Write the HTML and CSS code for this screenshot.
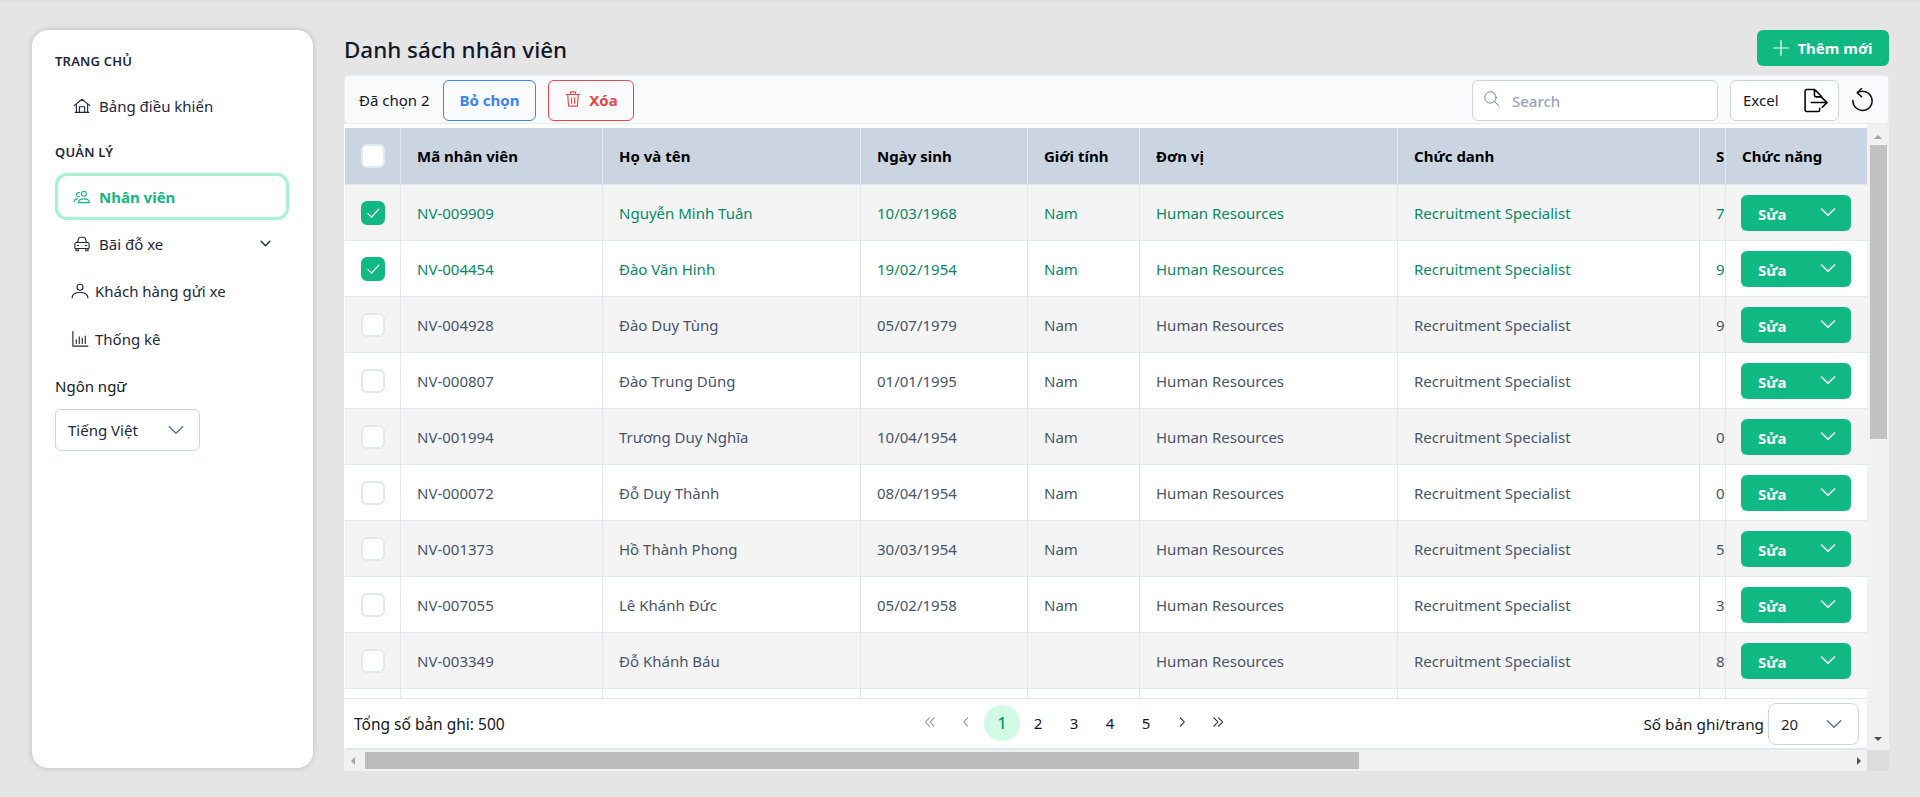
FILE: index.html
```html
<!DOCTYPE html>
<html lang="vi">
<head>
<meta charset="utf-8">
<title>Danh sách nhân viên</title>
<link rel="stylesheet" href="styles.css">
</head>
<body>
<aside class="sidebar">
  <div class="nav-label">TRANG CHỦ</div>
  <a class="nav-item"><svg class="nav-icon" viewBox="0 0 24 24"><path d="M1.500 11.500 12 3l10.500 8.500M4.500 9.500V20.500h15V9.500M3 20.500h18M8.500 20.500V13h7v7.500"/></svg><span>Bảng điều khiển</span></a>
  <div class="nav-label second">QUẢN LÝ</div>
  <a class="nav-item active"><svg class="nav-icon" viewBox="0 0 24 24"><circle cx="14.500" cy="7.500" r="3.200"/><path d="M7 19.500c.5-3.500 3.500-5 7.500-5s7 1.500 7.500 5zM8.500 11.500a2.800 2.800 0 1 1 .5-5M1.500 18c.5-2.500 2.500-3.500 4.500-3.500"/></svg><span>Nhân viên</span></a>
  <a class="nav-item"><svg class="nav-icon" viewBox="0 0 24 24"><path d="M6 10 7.500 4.500C7.800 3.500 8.500 3 9.500 3h5c1 0 1.700.5 2 1.500L18 10M4.500 10h15c1 0 2 1 2 2v5c0 .6-.4 1-1 1h-17c-.6 0-1-.4-1-1v-5c0-1 1-2 2-2zM4 18v3h3v-3M17 18v3h3v-3M5.500 14h2M16.500 14h2"/></svg><span>Bãi đỗ xe</span><svg class="nav-chevron" viewBox="0 0 24 24"><path d="m5 8.500 7 7 7-7"/></svg></a>
  <a class="nav-item tight"><svg class="nav-icon" viewBox="0 0 24 24"><circle cx="12" cy="7" r="4"/><path d="M1.500 21c0-4.500 4-7 10.500-7s10.500 2.500 10.500 7"/></svg><span>Khách hàng gửi xe</span></a>
  <a class="nav-item tight"><svg class="nav-icon" viewBox="0 0 24 24"><path d="M2.500 2v19.500h20M7 18v-5M11 18V9M15 18v-7M19 18V8"/></svg><span>Thống kê</span></a>
  <div class="lang-label">Ngôn ngữ</div>
  <div class="select lang"><span>Tiếng Việt</span><svg class="select-chevron" viewBox="0 0 24 24"><path d="m4 8 8 8 8-8"/></svg></div>
</aside>

<main class="main">
  <header class="topbar">
    <h1>Danh sách nhân viên</h1>
    <button class="btn-add"><svg viewBox="0 0 24 24"><path d="M12 1v22M1 12h22"/></svg><span>Thêm mới</span></button>
  </header>

  <div class="toolbar">
    <span class="selected-count">Đã chọn 2</span>
    <button class="btn-outline blue">Bỏ chọn</button>
    <button class="btn-outline red"><svg viewBox="0 0 24 24"><path d="M3 6h18M8.500 6V3.500c0-.5.5-1 1-1h5c.5 0 1 .5 1 1V6M5 6l1 14.500c0 .6.5 1 1 1h10c.5 0 1-.4 1-1L19 6M10 10.500v7M14 10.500v7"/></svg><span>Xóa</span></button>
    <div class="spacer"></div>
    <div class="search"><svg viewBox="0 0 24 24"><circle cx="10.500" cy="10.500" r="8"/><path d="m16.500 16.500 6 6"/></svg><span>Search</span></div>
    <button class="btn-excel"><span>Excel</span><svg viewBox="0 0 24 24"><path d="M16 19.500V21c0 .8-.7 1.500-1.500 1.500h-11C2.700 22.500 2 21.800 2 21V3c0-.8.7-1.500 1.500-1.500H10c.8 0 1.500.3 2 .8l5.200 5.200c.5.5.8 1 .8 1.800M11 1.500V7c0 .8.700 1.500 1.500 1.500H18M8 14h15M18.500 9.500 23 14l-4.500 4.500"/></svg></button>
    <button class="btn-refresh"><svg viewBox="0 0 24 24"><path d="M6.500 4.500A10 10 0 1 1 2 12.500M11 0 6.500 4.500 11 8.500"/></svg></button>
  </div>

  <section class="panel">
    <div class="panel-body">
      <div class="table-clip">
        <table class="grid">
          <colgroup>
            <col class="c-check"><col class="c-code"><col class="c-name"><col class="c-dob"><col class="c-sex"><col class="c-unit"><col class="c-title"><col class="c-s"><col class="c-act">
          </colgroup>
          <thead>
            <tr><th class="cell-check"><i class="check"></i></th><th>Mã nhân viên</th><th>Họ và tên</th><th>Ngày sinh</th><th>Giới tính</th><th>Đơn vị</th><th>Chức danh</th><th class="cell-s"><div>S</div></th><th class="cell-act">Chức năng</th></tr>
          </thead>
          <tbody>
            <tr class="picked"><td class="cell-check"><i class="check on"><svg viewBox="0 0 24 24"><path d="m5 12.500 5 5L19.500 7"/></svg></i></td><td>NV-009909</td><td>Nguyễn Minh Tuân</td><td>10/03/1968</td><td>Nam</td><td>Human Resources</td><td>Recruitment Specialist</td><td class="cell-s"><div>7</div></td><td class="cell-act"><div class="split"><b>Sửa</b><span class="split-arrow"><svg viewBox="0 0 24 24"><path d="m4 8 8 8 8-8"/></svg></span></div></td></tr>
            <tr class="picked"><td class="cell-check"><i class="check on"><svg viewBox="0 0 24 24"><path d="m5 12.500 5 5L19.500 7"/></svg></i></td><td>NV-004454</td><td>Đào Văn Hinh</td><td>19/02/1954</td><td>Nam</td><td>Human Resources</td><td>Recruitment Specialist</td><td class="cell-s"><div>9</div></td><td class="cell-act"><div class="split"><b>Sửa</b><span class="split-arrow"><svg viewBox="0 0 24 24"><path d="m4 8 8 8 8-8"/></svg></span></div></td></tr>
            <tr><td class="cell-check"><i class="check"></i></td><td>NV-004928</td><td>Đào Duy Tùng</td><td>05/07/1979</td><td>Nam</td><td>Human Resources</td><td>Recruitment Specialist</td><td class="cell-s"><div>9</div></td><td class="cell-act"><div class="split"><b>Sửa</b><span class="split-arrow"><svg viewBox="0 0 24 24"><path d="m4 8 8 8 8-8"/></svg></span></div></td></tr>
            <tr><td class="cell-check"><i class="check"></i></td><td>NV-000807</td><td>Đào Trung Dũng</td><td>01/01/1995</td><td>Nam</td><td>Human Resources</td><td>Recruitment Specialist</td><td class="cell-s"><div></div></td><td class="cell-act"><div class="split"><b>Sửa</b><span class="split-arrow"><svg viewBox="0 0 24 24"><path d="m4 8 8 8 8-8"/></svg></span></div></td></tr>
            <tr><td class="cell-check"><i class="check"></i></td><td>NV-001994</td><td>Trương Duy Nghĩa</td><td>10/04/1954</td><td>Nam</td><td>Human Resources</td><td>Recruitment Specialist</td><td class="cell-s"><div>0</div></td><td class="cell-act"><div class="split"><b>Sửa</b><span class="split-arrow"><svg viewBox="0 0 24 24"><path d="m4 8 8 8 8-8"/></svg></span></div></td></tr>
            <tr><td class="cell-check"><i class="check"></i></td><td>NV-000072</td><td>Đỗ Duy Thành</td><td>08/04/1954</td><td>Nam</td><td>Human Resources</td><td>Recruitment Specialist</td><td class="cell-s"><div>0</div></td><td class="cell-act"><div class="split"><b>Sửa</b><span class="split-arrow"><svg viewBox="0 0 24 24"><path d="m4 8 8 8 8-8"/></svg></span></div></td></tr>
            <tr><td class="cell-check"><i class="check"></i></td><td>NV-001373</td><td>Hồ Thành Phong</td><td>30/03/1954</td><td>Nam</td><td>Human Resources</td><td>Recruitment Specialist</td><td class="cell-s"><div>5</div></td><td class="cell-act"><div class="split"><b>Sửa</b><span class="split-arrow"><svg viewBox="0 0 24 24"><path d="m4 8 8 8 8-8"/></svg></span></div></td></tr>
            <tr><td class="cell-check"><i class="check"></i></td><td>NV-007055</td><td>Lê Khánh Đức</td><td>05/02/1958</td><td>Nam</td><td>Human Resources</td><td>Recruitment Specialist</td><td class="cell-s"><div>3</div></td><td class="cell-act"><div class="split"><b>Sửa</b><span class="split-arrow"><svg viewBox="0 0 24 24"><path d="m4 8 8 8 8-8"/></svg></span></div></td></tr>
            <tr><td class="cell-check"><i class="check"></i></td><td>NV-003349</td><td>Đỗ Khánh Báu</td><td></td><td></td><td>Human Resources</td><td>Recruitment Specialist</td><td class="cell-s"><div>8</div></td><td class="cell-act"><div class="split"><b>Sửa</b><span class="split-arrow"><svg viewBox="0 0 24 24"><path d="m4 8 8 8 8-8"/></svg></span></div></td></tr>
            <tr><td class="cell-check"></td><td></td><td></td><td></td><td></td><td></td><td></td><td class="cell-s"></td><td class="cell-act"></td></tr>
          </tbody>
        </table>
      </div>
      <footer class="pager">
        <span class="total">Tổng số bản ghi: 500</span>
        <nav class="pages">
          <a class="pg muted"><svg viewBox="0 0 24 24"><path d="M11 5 4 12l7 7M19 5l-7 7 7 7"/></svg></a>
          <a class="pg muted"><svg viewBox="0 0 24 24"><path d="m15 5-7 7 7 7"/></svg></a>
          <a class="pg current">1</a><a class="pg">2</a><a class="pg">3</a><a class="pg">4</a><a class="pg">5</a>
          <a class="pg"><svg viewBox="0 0 24 24"><path d="m9 5 7 7-7 7"/></svg></a>
          <a class="pg"><svg viewBox="0 0 24 24"><path d="m5 5 7 7-7 7M13 5l7 7-7 7"/></svg></a>
        </nav>
        <span class="per-page">Số bản ghi/trang</span>
        <div class="select size"><span>20</span><svg class="select-chevron" viewBox="0 0 24 24"><path d="m4 8 8 8 8-8"/></svg></div>
      </footer>
    </div>
    <div class="vbar"><i class="tri up"></i><i class="vthumb"></i><i class="vspace"></i><i class="tri down"></i></div>
    <div class="hbar"><i class="tri left"></i><i class="hthumb"></i><i class="hspace"></i><i class="tri right"></i></div>
    <div class="corner"></div>
  </section>
</main>
</body>
</html>
```

FILE: styles.css
```css
* { box-sizing: border-box; }
html, body { margin: 0; height: 100%; }
body {
  display: flex;
  gap: 31px;
  height: 797px;
  overflow: hidden;
  padding: 30px 31px 26px 32px;
  background: #e5e5e5;
  box-shadow: inset 0 2px 2px -1px #d8d8d8;
  font-family: "Noto Sans", sans-serif;
  font-size: 15px;
  color: #111827;
}
svg { fill: none; stroke: currentColor; stroke-width: 1.5; stroke-linecap: round; stroke-linejoin: round; display: block; }
i { display: block; }

/* sidebar */
.sidebar {
  width: 281px;
  flex: none;
  height: 738px;
  background: #fff;
  border-radius: 16px;
  box-shadow: 0 0 6px rgba(0, 0, 0, .18);
  padding: 20px 24px 20px 23px;
}
.nav-label { font-size: 13px; font-weight: 600; line-height: 22px; color: #1e293b; letter-spacing: .2px; }
.nav-label.second { margin-top: 12px; }
.nav-item { display: flex; align-items: center; height: 47px; padding-left: 18px; font-size: 15px; color: #1e293b; }
.sidebar > .nav-label:first-child + .nav-item { margin-top: 10px; }
.nav-icon { width: 18px; height: 18px; margin-right: 8px; flex: none; }
.nav-item.tight { padding-left: 16px; }
.nav-item.tight .nav-icon { width: 18px; margin-right: 6px; }
.nav-item.tight:last-of-type { margin-top: 1px; }
.nav-item.active {
  margin-top: 10px;
  border: 3px solid #a7f3d0;
  border-radius: 12px;
  padding-left: 15px;
  color: #10b981;
  font-weight: 700;
}
.nav-chevron { width: 15px; height: 15px; margin-left: auto; margin-right: 16px; stroke-width: 2.200; margin-top: -1px; }
.lang-label { margin-top: 12px; font-size: 15px; line-height: 24px; color: #111827; }
.select { display: flex; align-items: center; justify-content: space-between; background: #fff; border: 1px solid #cbd5e1; border-radius: 6px; color: #1e293b; }
.select-chevron { width: 20px; height: 20px; color: #64748b; stroke-width: 1.800; }
.lang { margin-top: 11px; width: 145px; height: 42px; padding: 0 13px 0 12px; }

/* main */
.main { flex: 1; min-width: 0; display: flex; flex-direction: column; }
.topbar { height: 45px; display: flex; justify-content: space-between; align-items: flex-start; flex: none; }
h1 { margin: 3px 0 0; font-size: 22.4px; font-weight: 500; line-height: 34px; color: #111827; }
.btn-add {
  width: 132px; height: 36px;
  display: flex; align-items: center; justify-content: center; gap: 8px;
  border: 0; border-radius: 6px;
  background: #10b981; color: #fff;
  font: 700 15px "Noto Sans", sans-serif;
}
.btn-add svg { width: 16px; height: 16px; stroke-width: 1.800; }

.toolbar {
  height: 49px; flex: none;
  display: flex; align-items: center;
  padding: 1px 14px 0 14px;
  background: #f8fafc;
  border: 1px solid #e8edf3;
  border-radius: 4px;
}
.selected-count { width: 84px; color: #111827; }
.btn-outline {
  height: 41px;
  display: flex; align-items: center; justify-content: center; gap: 7px;
  border-radius: 6px; border: 1px solid;
  background: transparent;
  font: 700 15px "Noto Sans", sans-serif;
}
.btn-outline.blue { width: 93px; color: #3b82f6; border-color: #3b82f6; margin-right: 12px; }
.btn-outline.red { width: 86px; color: #ef4444; border-color: #ef4444; }
.btn-outline.red svg { width: 18px; height: 18px; margin-top: -3px; }
.spacer { flex: 1; }
.search {
  width: 246px; height: 41px;
  display: flex; align-items: center; gap: 12px;
  padding-left: 10px;
  background: #fff; border: 1px solid #cbd5e1; border-radius: 6px;
  color: #94a3b8; font-weight: 500;
}
.search span { margin-top: 1px; }
.search svg { width: 17px; height: 17px; color: #64748b; margin-top: -3px; stroke-width: 1.300; }
.btn-excel {
  width: 109px; height: 41px; margin-left: 12px;
  display: flex; align-items: center; justify-content: space-between;
  padding: 0 10px 0 12px;
  background: #fff; border: 1px solid #cbd5e1; border-radius: 6px;
  font: 400 15px "Noto Sans", sans-serif; color: #111827;
}
.btn-excel svg { width: 25px; height: 25px; color: #000; }
.btn-refresh { width: 23px; height: 24px; margin-left: 12px; padding: 0; border: 0; background: none; color: #111; }
.btn-refresh svg { width: 23px; height: 24px; stroke-width: 1.600; }

/* panel */
.panel {
  flex: 1; min-height: 0;
  display: grid;
  grid-template-columns: 1fr 22px;
  grid-template-rows: 1fr 21px;
  background: #f1f1f1;
}
.panel-body { display: flex; flex-direction: column; min-height: 0; background: #fff; padding-left: 1px; }
.table-clip { flex: 1; min-height: 0; overflow: hidden; padding-top: 4px; }
.grid { width: 1522px; table-layout: fixed; border-collapse: separate; border-spacing: 0; }
.c-check { width: 56px; } .c-code { width: 202px; } .c-name { width: 258px; } .c-dob { width: 167px; }
.c-sex { width: 112px; } .c-unit { width: 258px; } .c-title { width: 302px; } .c-s { width: 26px; } .c-act { width: 141px; }
th, td { padding: 0 0 0 16px; text-align: left; border-right: 1px solid #e2e8f0; white-space: nowrap; overflow: hidden; }
th { height: 57px; background: #cbd5e1; border-bottom: 1px solid #e2e8f0; font-weight: 700; color: #000; }
td { height: 56px; border-bottom: 1px solid #e2e8f0; color: #475569; }
tbody tr:nth-child(odd) td { background: #f4f4f5; }
tbody tr:nth-child(even) td { background: #fff; }
.picked td { color: #068a64; }
.cell-check { padding: 0 0 0 16px; }
.cell-s { padding-left: 16px; padding-right: 0; }
.cell-s > div { width: 9px; overflow: hidden; }
.cell-act { padding-left: 15px; border-right: 0; }
th.cell-act { padding-left: 16px; }
.check { width: 24px; height: 24px; background: #fff; border: 2px solid #e2e8f0; border-radius: 6px; }
.check.on { background: #10b981; border-color: #10b981; color: #fff; padding: 1px; }
.check.on svg { width: 18px; height: 18px; stroke-width: 1.800; }
.split {
  width: 110px; height: 36px;
  display: flex; align-items: center;
  background: #10b981; border-radius: 6px; color: #fff;
}
.split b { flex: 1; padding-left: 17px; font-size: 15px; font-weight: 700; margin-top: 2px; }
.split-arrow { width: 48px; height: 36px; display: flex; align-items: center; justify-content: center; border-left: 1px solid #1bb585; }
.split svg { width: 20px; height: 20px; stroke-width: 1.800; margin-top: -1px; }

/* footer */
.pager {
  height: 52px; flex: none;
  display: flex; align-items: center;
  padding: 0 8px 0 9px;
  border-top: 1px solid #e2e8f0;
  border-bottom: 2px solid #e2e8f0;
  color: #111827;
}
.total { width: 560px; font-size: 15.5px; }
.pages { display: flex; width: 324px; margin-top: -1px; margin-left: -2px; }
.pg { width: 36px; height: 36px; display: flex; align-items: center; justify-content: center; border-radius: 50%; color: #111827; flex: none; }
.pg svg { width: 14px; height: 14px; margin-top: -3px; stroke-width: 1.800; }
.pg.muted { color: #8a8a8a; }
.pg.current { background: #d1fae5; color: #059669; font-size: 16px; font-weight: 500; }
.per-page { margin-left: auto; margin-right: 4px; font-size: 15.3px; }
.size { width: 91px; height: 42px; padding: 0 14px 0 12px; border-radius: 8px; }

/* scrollbars */
.vbar { display: flex; flex-direction: column; align-items: center; padding: 11px 0 0; background: #f1f1f1; }
.vthumb { width: 17px; height: 294px; margin-top: 6px; background: #c1c1c1; }
.vspace { flex: 1; }
.hbar { display: flex; align-items: center; padding: 0 6px 0 7px; background: #f1f1f1; }
.hthumb { width: 994px; height: 17px; margin-left: 10px; background: #bdbdbd; }
.hspace { flex: 1; }
.corner { background: #dcdcdc; }
.tri { width: 0; height: 0; border-style: solid; border-color: transparent; }
.tri.up { border-width: 0 4px 4px; border-bottom-color: #a3a3a3; }
.tri.down { border-width: 4px 4px 0; border-top-color: #505050; margin-bottom: 9px; }
.tri.left { border-width: 4px 4px 4px 0; border-right-color: #a3a3a3; }
.tri.right { border-width: 4px 0 4px 4px; border-left-color: #505050; }
```
